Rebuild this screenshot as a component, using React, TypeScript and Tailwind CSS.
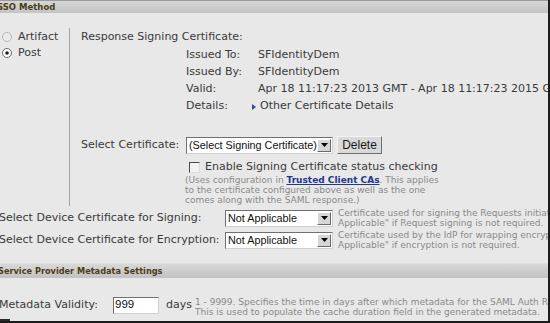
import React from "react";

function Radio({ checked }: { checked?: boolean }) {
  return (
    <svg width="10" height="10" viewBox="0 0 10 10" className="shrink-0">
      <circle cx="5" cy="5" r="4.5" fill={checked ? "#ffffff" : "#ececec"} stroke={checked ? "#6a6a6a" : "#b8b8b8"} strokeWidth="1" />
      {checked && <circle cx="5" cy="5" r="1.8" fill="#1e1e1e" />}
    </svg>
  );
}

function Select({ text, width }: { text: string; width: string }) {
  return (
    <div className={`${width} shrink-0 h-[17px] flex bg-white border border-t-[#707070] border-l-[#707070] border-r-[#d0d0d0] border-b-[#d0d0d0] font-['Liberation_Sans',Arial,sans-serif] text-[10.8px] text-[#111]`}>
      <div className="flex-1 pl-[2px] flex items-center overflow-hidden whitespace-nowrap">{text}</div>
      <div className="w-[14px] shrink-0 my-[1px] mr-[1px] bg-[#d6d6d6] border border-t-white border-l-white border-r-[#6a6a6a] border-b-[#6a6a6a] flex items-center justify-center">
        <svg width="7" height="4" viewBox="0 0 7 4"><path d="M0 0h7L3.5 4z" fill="#000" /></svg>
      </div>
    </div>
  );
}

export default function App() {
  return (
    <div className="w-[550px] h-[323px] overflow-hidden relative bg-[#e8e8e8] border-r-2 border-b-2 border-[#1c1c1c] font-['DejaVu_Sans',Verdana,sans-serif] text-[11px] text-[#3a3a3a]">
      <div className="h-[13px] bg-gradient-to-b from-[#d6d6d6] to-[#c4c4c4] border-t border-[#9a9a9a] flex items-center text-[8.5px] font-bold text-[#4a3d16] whitespace-nowrap">
        <span className="-ml-[3px] shrink-0">SSO Method</span>
      </div>

      <div className="flex mt-[15px] h-[178px]">
        <div className="w-[69px] shrink-0 pt-[1px] flex flex-col">
          <div className="h-[16px] flex items-center gap-[6px] pl-[2px]">
            <Radio />
            <span>Artifact</span>
          </div>
          <div className="h-[16px] flex items-center gap-[6px] pl-[2px]">
            <Radio checked />
            <span>Post</span>
          </div>
        </div>
        <div className="flex-1 min-w-0 border-l border-[#a4a4a4] pl-[11px] flex flex-col whitespace-nowrap">
          <div className="h-[19px] flex items-center">Response Signing Certificate:</div>
          <div className="pl-[105px] flex flex-col">
            <div className="h-[17px] flex items-center"><span className="w-[72px] shrink-0">Issued To:</span><span className="shrink-0">SFIdentityDem</span></div>
            <div className="h-[17px] flex items-center"><span className="w-[72px] shrink-0">Issued By:</span><span className="shrink-0">SFIdentityDem</span></div>
            <div className="h-[17px] flex items-center"><span className="w-[72px] shrink-0">Valid:</span><span className="shrink-0">Apr 18 11:17:23 2013 GMT - Apr 18 11:17:23 2015 GMT</span></div>
            <div className="h-[17px] flex items-center">
              <span className="w-[66px] shrink-0">Details:</span>
              <svg width="4" height="6" viewBox="0 0 4 6" className="mr-[4px] shrink-0"><path d="M0 0L4 3L0 6z" fill="#2d4f86" /></svg>
              <span className="shrink-0">Other Certificate Details</span>
            </div>
          </div>
          <div className="mt-[21px] h-[18px] flex items-center">
            <span className="w-[105px] shrink-0">Select Certificate:</span>
            <Select text="(Select Signing Certificate)" width="w-[147px]" />
            <button className="ml-[4px] w-[45px] shrink-0 h-[18px] bg-[#d9d9d9] border border-t-[#f4f4f4] border-l-[#f4f4f4] border-r-[#6e6e6e] border-b-[#6e6e6e] font-['Liberation_Sans',Arial,sans-serif] text-[12px] text-[#1a1a1a] flex items-center justify-center">Delete</button>
          </div>
          <div className="mt-[6px] h-[15px] flex items-center pl-[108px]">
            <div className="w-[11px] h-[11px] shrink-0 bg-[#f2f2f2] border border-t-[#4a4a4a] border-l-[#4a4a4a] border-r-[#dcdcdc] border-b-[#dcdcdc] mr-[5px]" />
            <span className="shrink-0">Enable Signing Certificate status checking</span>
          </div>
          <div className="pl-[104px] text-[9px] leading-[10px] text-[#8a8a8a]">
            <div>(Uses configuration in <span className="text-[#22378f] underline font-semibold">Trusted Client CAs</span>. This applies</div>
            <div>to the certificate configured above as well as the one</div>
            <div>comes along with the SAML response.)</div>
          </div>
        </div>
      </div>

      <div className="mt-[1px] flex flex-col whitespace-nowrap">
        <div className="h-[22px] flex items-center">
          <span className="w-[226px] shrink-0 -ml-[1px]">Select Device Certificate for Signing:</span>
          <Select text="Not Applicable" width="w-[108px]" />
          <div className="ml-[5px] shrink-0 text-[9px] leading-[10px] text-[#8a8a8a]">
            <div>Certificate used for signing the Requests initiated by the IdP. Select "Not</div>
            <div>Applicable" if Request signing is not required.</div>
          </div>
        </div>
        <div className="h-[22px] flex items-center">
          <span className="w-[226px] shrink-0 -ml-[1px]">Select Device Certificate for Encryption:</span>
          <Select text="Not Applicable" width="w-[108px]" />
          <div className="ml-[5px] shrink-0 text-[9px] leading-[10px] text-[#8a8a8a]">
            <div>Certificate used by the IdP for wrapping encrypted assertions. Select "Not</div>
            <div>Applicable" if encryption is not required.</div>
          </div>
        </div>
      </div>

      <div className="mt-[12px] h-[15px] bg-gradient-to-b from-[#d8d8d8] to-[#c2c2c2] border-t border-[#dedede] flex items-center text-[8.2px] font-bold text-[#4a3d16] whitespace-nowrap">
        <span className="-ml-[2px] shrink-0">Service Provider Metadata Settings</span>
      </div>

      <div className="mt-[17px] h-[20px] flex items-center whitespace-nowrap">
        <span className="w-[114px] shrink-0 -ml-[1px]">Metadata Validity:</span>
        <div className="w-[46px] shrink-0 h-[17px] bg-white border border-t-[#707070] border-l-[#707070] border-r-[#d0d0d0] border-b-[#d0d0d0] font-['Liberation_Sans',Arial,sans-serif] text-[11.5px] text-[#111] pl-[1px] flex items-center">999</div>
        <span className="ml-[7px] shrink-0 text-[11px]">days</span>
        <div className="ml-[3px] mt-[3px] shrink-0 text-[9px] leading-[10px] text-[#8a8a8a]">
          <div>1 - 9999. Specifies the time in days after which metadata for the SAML Auth Request expires.</div>
          <div>This is used to populate the cache duration field in the generated metadata.</div>
        </div>
      </div>

      <div className="absolute left-0 bottom-0 w-[10px] h-[2px] bg-[#2a2a2a]" />
    </div>
  );
}
